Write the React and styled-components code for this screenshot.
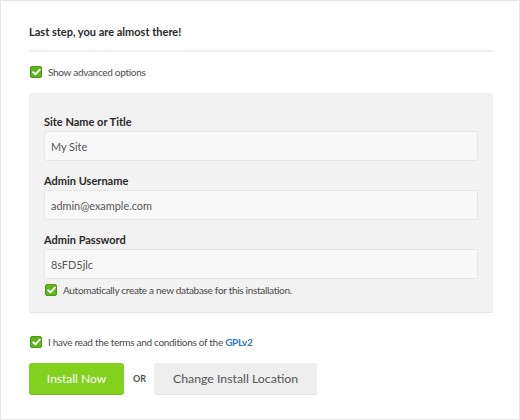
import React from "react";
import styled, { createGlobalStyle } from "styled-components";

const Global = createGlobalStyle`
  html, body { margin: 0; padding: 0; background: #fff; }
  body { font-family: "Lato", "Open Sans", sans-serif; }
  * { box-sizing: border-box; }
`;

const Frame = styled.div`
  width: 520px;
  height: 420px;
  border: 1px solid #e6e6e6;
  padding: 24px 26px 0 28px;
  display: flex;
  flex-direction: column;
`;

const Heading = styled.h2`
  margin: 0;
  font-size: 11px;
  font-weight: 700;
  color: #2a2a2a;
  line-height: 14px;
  padding-bottom: 11px;
  border-bottom: 2px solid #f0f0f0;
`;

const CheckRow = styled.label`
  display: flex;
  align-items: center;
  gap: 6px;
  font-size: 10px;
  letter-spacing: -0.3px;
  color: #4a4a4a;
  height: 12px;
  margin-top: ${(p) => p.$mt || 0}px;
  margin-left: 1px;
`;

const Box = styled.span`
  width: 12px;
  height: 12px;
  border-radius: 2px;
  background: #5fb51a;
  border: 1px solid #4c9a10;
  display: flex;
  align-items: center;
  justify-content: center;
  flex: none;
`;

const Link = styled.a`
  color: #2f7ab8;
  font-weight: 700;
  text-decoration: none;
`;

const Panel = styled.div`
  margin-top: 15px;
  background: #f2f2f2;
  border-radius: 3px;
  box-shadow: 0 1px 0 #e3e3e3;
  padding: 22px 15px 16px 15px;
  display: flex;
  flex-direction: column;
`;

const Field = styled.div`
  display: flex;
  flex-direction: column;
  margin-bottom: ${(p) => p.$mb ?? 13}px;
`;

const Label = styled.div`
  font-size: 11px;
  font-weight: 700;
  color: #2a2a2a;
  line-height: 13px;
  margin-bottom: 3px;
`;

const Input = styled.div`
  height: 30px;
  background: #f8f8f8;
  border: 1px solid #e6e6e6;
  border-radius: 3px;
  padding: 0 6px;
  display: flex;
  align-items: center;
  font-size: 10.9px;
  color: #555;
`;

const Actions = styled.div`
  margin-top: 15px;
  display: flex;
  align-items: center;
`;

const Button = styled.button`
  height: 31px;
  border: none;
  border-radius: 3px;
  font-family: inherit;
  font-size: ${(p) => (p.$primary ? 12 : 12.3)}px;
  padding: 0;
  width: ${(p) => p.$w}px;
  background: ${(p) => (p.$primary ? "#81d11e" : "#eeeeee")};
  color: ${(p) => (p.$primary ? "#fff" : "#555")};
  box-shadow: 0 1px 0 ${(p) => (p.$primary ? "#74bd19" : "#e2e2e2")};
`;

const Or = styled.span`
  font-size: 9px;
  font-weight: 700;
  color: #555;
  margin: 0 8px 0 9px;
`;

const Check = () => (
  <Box>
    <svg width="9" height="8" viewBox="0 0 9 8">
      <path d="M1.2 4.2 L3.5 6.3 L7.8 1.6" fill="none" stroke="#fff" strokeWidth="1.9" strokeLinecap="round" strokeLinejoin="round" />
    </svg>
  </Box>
);

export default function App() {
  return (
    <>
      <Global />
      <Frame>
        <Heading>Last step, you are almost there!</Heading>
        <CheckRow $mt={14}>
          <Check />
          <span>Show advanced options</span>
        </CheckRow>
        <Panel>
          <Field>
            <Label>Site Name or Title</Label>
            <Input>My Site</Input>
          </Field>
          <Field>
            <Label>Admin Username</Label>
            <Input>admin@example.com</Input>
          </Field>
          <Field $mb={5}>
            <Label>Admin Password</Label>
            <Input>8sFD5jlc</Input>
          </Field>
          <CheckRow>
            <Check />
            <span>Automatically create a new database for this installation.</span>
          </CheckRow>
        </Panel>
        <CheckRow $mt={24}>
          <Check />
          <span>
            I have read the terms and conditions of the <Link>GPLv2</Link>
          </span>
        </CheckRow>
        <Actions>
          <Button $primary $w={95}>Install Now</Button>
          <Or>OR</Or>
          <Button $w={163}>Change Install Location</Button>
        </Actions>
      </Frame>
    </>
  );
}
